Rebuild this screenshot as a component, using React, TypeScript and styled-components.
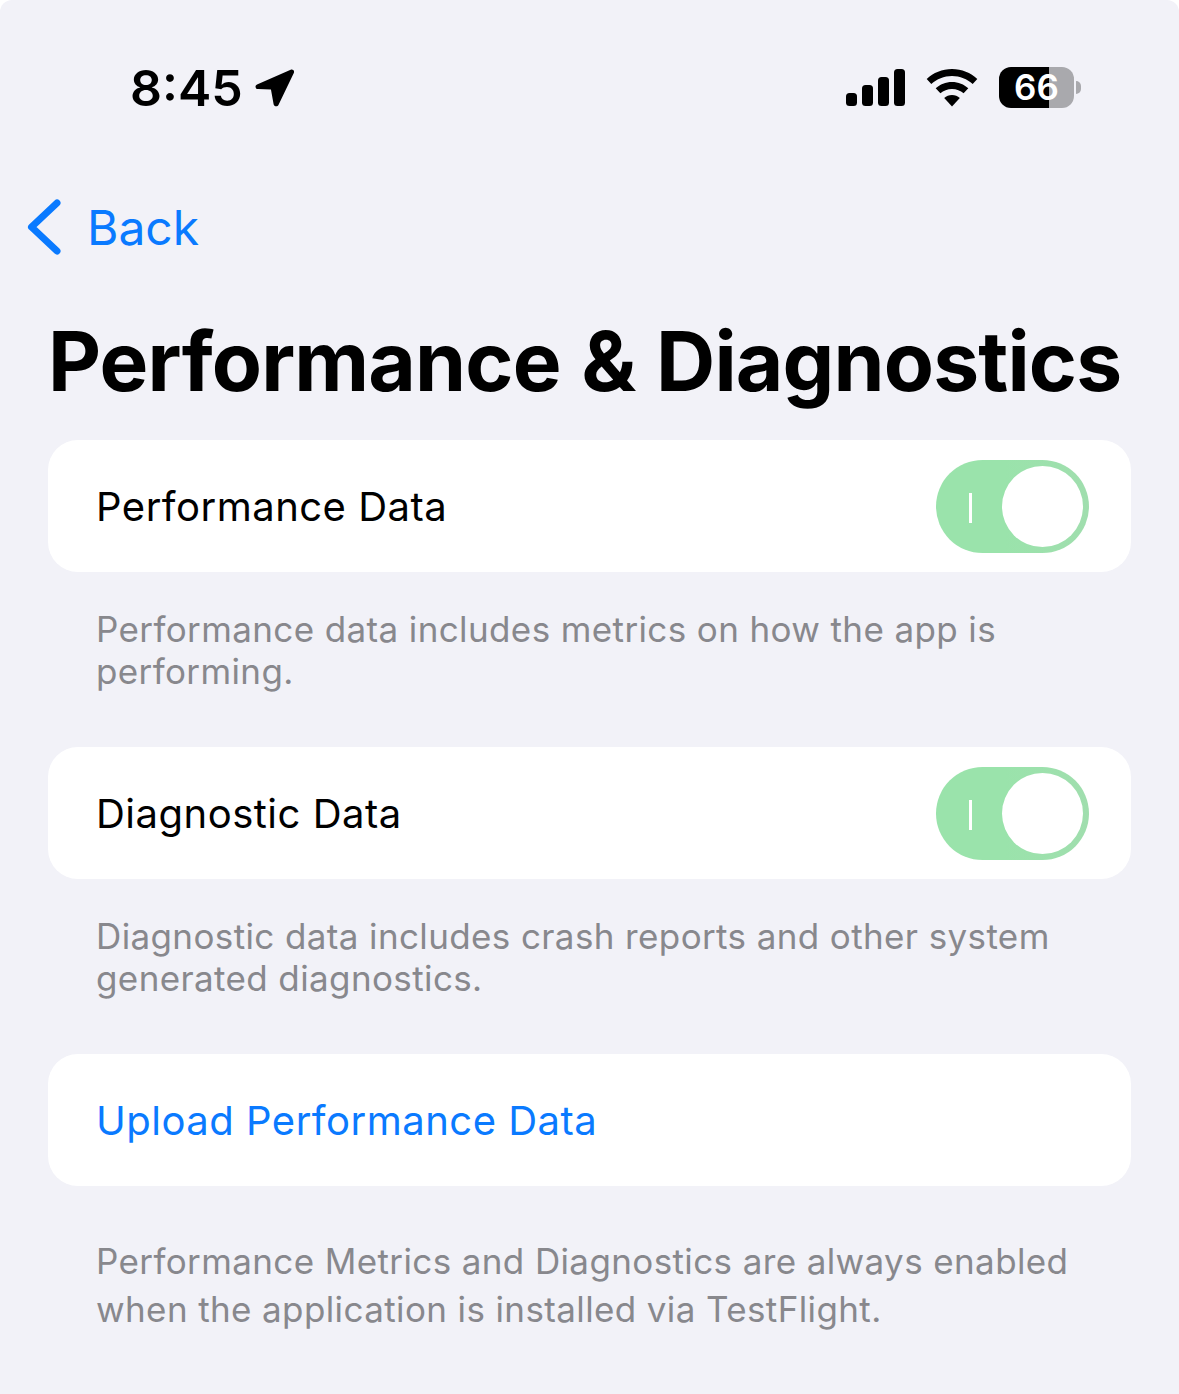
import React from "react";
import styled, { createGlobalStyle } from "styled-components";

const Global = createGlobalStyle`
  html, body { margin: 0; padding: 0; background: #fff; }
  body { font-family: Inter, "Liberation Sans", sans-serif; -webkit-font-smoothing: antialiased; }
`;

const Screen = styled.div`
  width: 1179px;
  height: 1394px;
  box-sizing: border-box;
  background: #f2f2f8;
  border-radius: 12px 12px 0 0;
  overflow: hidden;
  color: #000;
`;

const StatusBar = styled.div`
  height: 176px;
  box-sizing: border-box;
  padding: 62px 96px 0 130px;
  display: flex;
  justify-content: space-between;
  align-items: flex-start;
`;

const TimeGroup = styled.div`
  display: flex;
  align-items: center;
  gap: 11px;
  height: 52px;
`;

const Time = styled.span`
  font-size: 50px;
  line-height: 52px;
  font-weight: 600;
`;

const StatusIcons = styled.div`
  display: flex;
  align-items: center;
  gap: 21px;
  height: 52px;
`;

const Battery = styled.div`
  position: relative;
  width: 84px;
  height: 42px;
`;

const BatteryBody = styled.div`
  position: absolute;
  left: 0;
  top: 0;
  width: 75px;
  height: 41px;
  border-radius: 12px;
  overflow: hidden;
  background: linear-gradient(90deg, #000 0 50px, #a9a9ad 50px);
  display: flex;
  align-items: center;
  justify-content: center;
  color: #fff;
  font-size: 35px;
  font-weight: 600;
  line-height: 41px;
`;

const BatteryCap = styled.div`
  position: absolute;
  left: 77px;
  top: 14px;
  width: 5px;
  height: 13px;
  border-radius: 0 6px 6px 0;
  background: #a9a9ad;
`;

const Nav = styled.div`
  height: 104px;
  box-sizing: border-box;
  padding-left: 26px;
  display: flex;
  align-items: center;
  gap: 23px;
  color: #0a7aff;
`;

const BackLabel = styled.span`
  font-size: 48px;
  font-weight: 400;
  line-height: 104px;
`;

const Content = styled.div`
  padding: 0 48px;
`;

const Title = styled.h1`
  margin: 0;
  padding-top: 40px;
  height: 160px;
  box-sizing: border-box;
  font-size: 82px;
  line-height: 84px;
  font-weight: 700;
  letter-spacing: -0.85px;
  word-spacing: 2px;
  white-space: nowrap;
`;

const Card = styled.div`
  height: 132px;
  box-sizing: border-box;
  background: #fff;
  border-radius: 30px;
  padding: 0 42px 0 48px;
  display: flex;
  align-items: center;
  justify-content: space-between;
`;

const RowLabel = styled.span<{ $link?: boolean }>`
  font-size: 40px;
  font-weight: 400;
  letter-spacing: 0.5px;
  color: ${(p) => (p.$link ? "#0a7aff" : "#000")};
`;

const Switch = styled.div`
  position: relative;
  width: 153px;
  height: 93px;
  border-radius: 47px;
  background: linear-gradient(90deg, #9ae3ab 45%, #a0deae 100%);
`;

const SwitchMark = styled.div`
  position: absolute;
  left: 33px;
  top: 33px;
  width: 3px;
  height: 30px;
  background: #fff;
`;

const Knob = styled.div`
  position: absolute;
  right: 6px;
  top: 6px;
  width: 81px;
  height: 81px;
  border-radius: 50%;
  background: #fff;
`;

const Footer = styled.p<{ $height: number; $lineHeight: number; $top: number }>`
  margin: 0;
  padding: ${(p) => p.$top}px 48px 0;
  height: ${(p) => p.$height}px;
  box-sizing: border-box;
  font-size: 35px;
  line-height: ${(p) => p.$lineHeight}px;
  letter-spacing: 0.38px;
  color: #88888d;
`;

const LocationArrow = () => (
  <svg width="40" height="40" viewBox="0 0 42 42" aria-hidden="true">
    <path
      d="M38.5 1.8 3.2 17.2c-2.6 1.2-1.9 4.8 1 4.9l13.6.5 2.8 15.4c.5 2.7 4.1 3.1 5.2.6L41.8 5.300c1-2.400-1-4.400-3.300-3.500Z"
      fill="#000"
    />
  </svg>
);

const Signal = () => (
  <svg width="59" height="38" viewBox="0 0 59 38" aria-hidden="true">
    <rect x="0" y="24" width="11" height="13" rx="3.500" fill="#000" />
    <rect x="16" y="16" width="11" height="21" rx="3.500" fill="#000" />
    <rect x="32" y="8" width="11" height="29" rx="3.500" fill="#000" />
    <rect x="48" y="0" width="11" height="37" rx="3.500" fill="#000" />
  </svg>
);

const Wifi = () => (
  <svg width="52" height="38" viewBox="0 0 52 38" aria-hidden="true">
    <path d="M26 0c9.800 0 18.700 3.800 25.300 10l-4.600 5C41.200 9.900 34 6.900 26 6.900S10.800 9.900 5.300 15L.7 10C7.300 3.800 16.200 0 26 0Z" fill="#000" />
    <path d="M26 13c6.300 0 12 2.400 16.300 6.300l-4.700 5C34.500 21.600 30.500 20 26 20s-8.500 1.600-11.600 4.300l-4.700-5C14 15.400 19.700 13 26 13Z" fill="#000" />
    <path d="M26 26c3 0 5.700 1.100 7.800 3L26 37.500 18.200 29c2.100-1.900 4.800-3 7.800-3Z" fill="#000" />
  </svg>
);

const Chevron = () => (
  <svg width="38" height="60" viewBox="0 0 38 60" aria-hidden="true" style={{ marginTop: -3 }}>
    <path d="M31 6 5.500 30 31 54" fill="none" stroke="#0a7aff" strokeWidth="7" strokeLinecap="round" strokeLinejoin="round" />
  </svg>
);

const ToggleSwitch = () => (
  <Switch>
    <SwitchMark />
    <Knob />
  </Switch>
);

export default function App() {
  return (
    <Screen>
      <Global />
      <StatusBar>
        <TimeGroup>
          <Time>8:45</Time>
          <LocationArrow />
        </TimeGroup>
        <StatusIcons>
          <Signal />
          <Wifi />
          <Battery>
            <BatteryBody>66</BatteryBody>
            <BatteryCap />
          </Battery>
        </StatusIcons>
      </StatusBar>
      <Nav>
        <Chevron />
        <BackLabel>Back</BackLabel>
      </Nav>
      <Content>
        <Title>Performance &amp; Diagnostics</Title>
        <Card>
          <RowLabel>Performance Data</RowLabel>
          <ToggleSwitch />
        </Card>
        <Footer $height={175} $lineHeight={42} $top={36}>
          Performance data includes metrics on how the app is performing.
        </Footer>
        <Card>
          <RowLabel>Diagnostic Data</RowLabel>
          <ToggleSwitch />
        </Card>
        <Footer $height={175} $lineHeight={42} $top={36}>
          Diagnostic data includes crash reports and other system generated diagnostics.
        </Footer>
        <Card>
          <RowLabel $link>Upload Performance Data</RowLabel>
        </Card>
        <Footer $height={160} $lineHeight={48} $top={51}>
          Performance Metrics and Diagnostics are always enabled when the application is installed via TestFlight.
        </Footer>
      </Content>
    </Screen>
  );
}
